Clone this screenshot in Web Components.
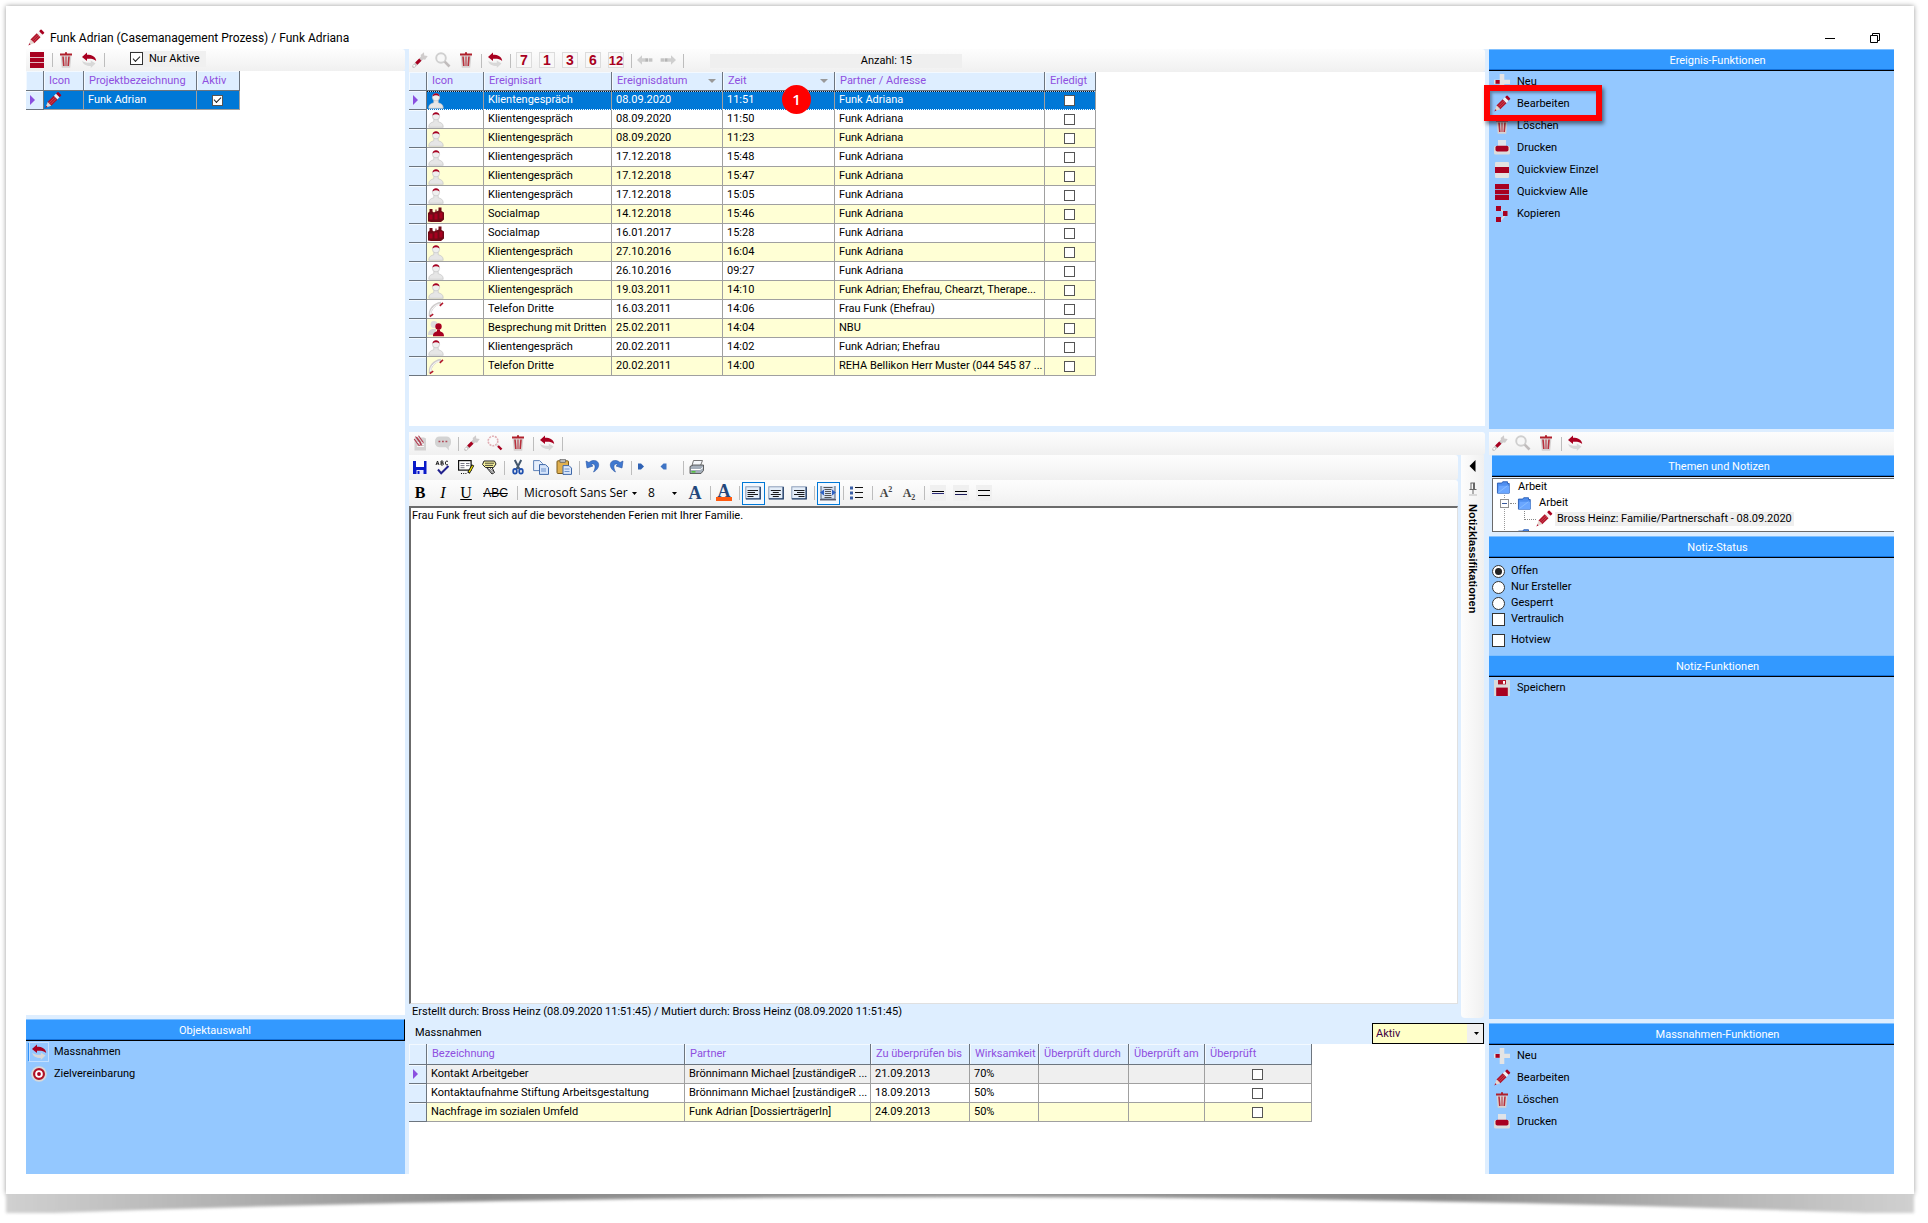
<!DOCTYPE html>
<html lang="de">
<head>
<meta charset="utf-8">
<title>Funk Adrian (Casemanagement Prozess) / Funk Adriana</title>
<style>
  html, body { margin: 0; background: #fff; }
  body {
    font: 11px/14px Roboto, "Liberation Sans", Arial, sans-serif;
    color: #000;
    --pale: #deeeff;
    --panel: #94c8ff;
    --accent: #3399ff;
    --violet: #8f4fe0;
    --red: #a80020;
  }
</style>
</head>
<body>
<case-app></case-app>

<script>
const ICONS = {
  pencil: `<g transform="translate(-.6 .4) rotate(45 8 8)"><rect x="5.500" y="-2.500" width="5" height="3" rx=".8" fill="#a80020"/><rect x="5.500" y=".5" width="5" height="3" fill="#f4f0f0"/><rect x="5.300" y="3.500" width="5.400" height="8.800" fill="#b0142a"/><path d="M7.200 3.600v8.600M9 3.600v8.600" stroke="#d9606c" stroke-width=".6"/><path d="M5.500 12.200h5L8.600 16.500H7.400z" fill="#e6d6d0"/><path d="M7.200 15.600h1.600L8 18z" fill="#a80020"/></g>`,
  trash: `<path d="M2.600 3.500h10.800l-1.200 12.300H3.800z" fill="#d6d2d2"/><path d="M5 4.500l.8 9.500M11 4.500l-.8 9.500" stroke="#b8303c" stroke-width="1.600"/><path d="M8 4.500V14" stroke="#c05862" stroke-width="1.400"/><path d="M2 2.500h12M7 1.200h2" stroke="#b0202c" stroke-width="1.800"/>`,
  swap: `<path d="M1 5l5-4.400v2.100c5 .1 8.600 1.600 9.200 6.200C13.200 6.800 10 6.500 6 6.700v2.300z" fill="#a80020"/><path d="M14.500 11.600L9.800 15.900v-1.800C5 14 2 12.500 1.200 8.800c2 1.600 4.500 2.200 8.600 2V8.600z" fill="#d8d8d8"/>`,
  stack: `<path d="M1 0h14v5H1zM1 5.700h14v4.600H1zM1 11h14v5H1z" fill="#a80020"/>`,
  wrench: `<path d="M1.700 14.300L11 5" stroke="#cbc8c8" stroke-width="3.200" stroke-linecap="round"/><path d="M4.300 11.700l4-4" stroke="#a80020" stroke-width="3.200"/><path d="M9.300 7l-.6-4L12 .2l.2 3.300 3.500.6-2.600 3.600z" fill="#cfcccc"/><circle cx="2.200" cy="13.800" r="1" fill="#fff"/>`,
  lens: `<circle cx="6" cy="6" r="4.800" fill="#f7f7f7" stroke="#cfcfcf" stroke-width="1.900"/><path d="M9.700 9.700l4.800 4.800" stroke="#c0bcbc" stroke-width="2.600"/>`,
  lensred: `<circle cx="6" cy="6" r="4.800" fill="#fafafa" stroke="#e0aeb4" stroke-width="1.600" stroke-dasharray="2 1"/><path d="M9.500 9.500l1.500 1.500" stroke="#ddd" stroke-width="2.400"/><path d="M11 11l3.500 3.500" stroke="#a80020" stroke-width="2.400"/>`,
  left: `<path d="M0 8l5-4.800v3.100h4v3.400H5v3.100z" fill="#cfcfcf"/><rect x="8.500" y="6.300" width="2.800" height="3.400" fill="#b3b3b3"/><rect x="12" y="6.300" width="3.400" height="3.400" fill="#c4c4c4"/>`,
  right: `<path d="M16 8l-5-4.800v3.100H7v3.400h4v3.100z" fill="#cfcfcf"/><rect x="4.500" y="6.300" width="2.800" height="3.400" fill="#b3b3b3"/><rect x=".6" y="6.300" width="3.400" height="3.400" fill="#c4c4c4"/>`,
  person: `<path d="M.8 15.800c0-4.200 2.400-4.600 5-5.600V8h4.400v2.200c2.600 1 5 1.400 5 5.600z" fill="#e6e6e6" stroke="#c4c4c4" stroke-width=".7"/><circle cx="8" cy="4.800" r="3.600" fill="#efefef" stroke="#c4c4c4" stroke-width=".7"/><path d="M4.500 3.900C4.900-.3 11.100-.3 11.500 3.900 9.500 2.300 6.500 2.300 4.500 3.900z" fill="#a80020"/>`,
  group: `<path d="M0 15V6.500L1.500 5V2.500h3V5L6 6l1.500-1V3h1v2l2-1V1h3v3.500L16 6v7l-3 2.500H3z" fill="#6f0a16"/><path d="M1.500 8h3v5h-3zM6.500 7h3v6h-3zM11.500 6h3v6h-3z" fill="#a80020"/>`,
  phone: `<path d="M2 14.500C1.500 8 6 2.500 13 1.500" fill="none" stroke="#cfcccc" stroke-width="2.600"/><path d="M2.500 12.500C2.500 8 6 4 11.500 2.500" fill="none" stroke="#fff" stroke-width=".9"/><path d="M1.800 15.200l3.400-2.600M11.800 4.400L15 1.400" stroke="#b0182c" stroke-width="1.500"/>`,
  pair: `<circle cx="6" cy="4" r="3.400" fill="#dedede"/><path d="M0 14.500c0-4 2-5 4-6h4v6z" fill="#d6d6d6"/><circle cx="10.500" cy="6" r="3.200" fill="#a80020"/><path d="M5 15.800c0-3.600 2-4 4-5V9h3v1.800c2 1 4 1.400 4 5z" fill="#a80020"/>`,
  plus: `<path d="M5.700 0h4.600v5.700H16v4.200h-5.700V16H5.700V9.900H0V5.700h5.700z" fill="#e4e4e4"/><rect x="1.500" y="6" width="4.200" height="3.800" fill="#a80020"/>`,
  printer: `<rect x="4" y="0" width="8" height="6" fill="#dfe3e8"/><rect x="0" y="6" width="16" height="8.500" rx="1.600" fill="#dcdcdc"/><rect x="1.500" y="5.800" width="13" height="5.800" rx="1.800" fill="#a80020"/>`,
  single: `<rect x="1" y="0" width="14" height="16" rx="1" fill="#e2e2e2"/><rect x="1" y="5" width="14" height="6" fill="#a80020"/>`,
  copyred: `<path d="M6 3l6 5-5 6" fill="none" stroke="#ddd" stroke-width="1.600"/><rect x="2" y="0" width="5" height="5" fill="#a80020"/><rect x="9" y="5" width="4.500" height="5" fill="#a80020"/><rect x="2" y="11" width="5" height="5" fill="#a80020"/>`,
  target: `<circle cx="8" cy="8" r="7.800" fill="#d8d8d8"/><circle cx="8" cy="8" r="4.900" fill="#fff" stroke="#b01226" stroke-width="2.200"/><circle cx="8" cy="8" r="1.900" fill="#a80020"/>`,
  disk: `<rect x="0" y="0" width="16" height="16" fill="#dadada"/><rect x="4" y="0" width="8" height="4.400" fill="#b01226"/><rect x="9" y="1" width="2" height="2.800" fill="#fff"/><rect x="2.200" y="7.600" width="11.600" height="8.400" fill="#a80020"/>`,
  clip: `<path d="M2.500 2.500h9.500l2 1V15.500H2.500z" fill="#d4d2d2"/><path d="M5 7.500h7M5 9.500h7M5 11.500h7" stroke="#f4f4f4"/><path d="M3.500 1.500l6.500 9M6.500.8l5 7M2.200 4l4 5.600c1 1.400 3.600 0 2.600-1.700L4.600 2" fill="none" stroke="#b23c50" stroke-width="1.100"/>`,
  speech: `<rect x="0" y="1.500" width="16" height="10.800" rx="4.500" fill="#d3d3d3"/><path d="M10 11l4 4.500-.5-5.500z" fill="#d3d3d3"/><path d="M3.500 6.500h1.800M7 6.500h1.800M10.500 6.500h1.800" stroke="#b04a58" stroke-width="1.600"/>`,
  save: `<path d="M1 2h13.500v13H1z" fill="#0a1ac8"/><rect x="4" y="2" width="8" height="6" fill="#fff"/><rect x="4.500" y="11" width="7" height="4" fill="#e8e8ff"/><rect x="5.500" y="12" width="2" height="3" fill="#0a1ac8"/>`,
  spell: `<path d="M1 6l1.500-4L4 6M1.600 4.800h1.900M6 2v4h1.600c1.200 0 1.200-2 0-2H6.200 7.400c1 0 1-2 0-2zM13 2.500c-1.500-1.200-2.600 0-2.600 1.500S11.600 6.700 13 5.500" fill="none" stroke="#111" stroke-width=".9"/><path d="M3 10.500l3.200 3.800L13.500 7" fill="none" stroke="#20208c" stroke-width="2"/>`,
  form: `<rect x=".6" y="1.600" width="12.500" height="9.500" fill="#fff" stroke="#111" stroke-width="1.200"/><path d="M2.500 4.500h4M8 4.500h3.500M2.500 6.600h4M8 6.600h3.500M2.500 8.700h4" stroke="#556" stroke-width=".8"/><path d="M15 6l-4.500 8" stroke="#111" stroke-width="2.800"/><path d="M14.700 6.800l-3.600 6.300" stroke="#e8d800" stroke-width="1.300"/><path d="M3 14.500h6" stroke="#111" stroke-dasharray="1 1.200"/>`,
  marker: `<path d="M3 2h10.500l1.500 3-2.500 3.500H4.500L1.500 5.500z" fill="#f3ee9a" stroke="#222" stroke-width="1"/><path d="M4 4.200h9M4 6.400h8" stroke="#222" stroke-width=".8"/><path d="M5.500 8.500l5.500 6.500 2.500-1.500L11 8.500z" fill="#fff" stroke="#222"/><path d="M7.500 9.500l4 4.500M9 9l3.500 4" stroke="#222" stroke-width=".7"/>`,
  cut: `<path d="M4.800 1l4.600 9M11.200 1L6.600 10" stroke="#44586e" stroke-width="2"/><ellipse cx="5" cy="12.300" rx="1.800" ry="2.400" fill="none" stroke="#1f4fae" stroke-width="1.800"/><ellipse cx="11" cy="12.300" rx="1.800" ry="2.400" fill="none" stroke="#1f4fae" stroke-width="1.800"/>`,
  copy: `<path d="M.6 1.600h6l3 3v7h-9z" fill="#e6effc" stroke="#5f83b8"/><path d="M6.500 5.600h6l3 3v6.800h-9z" fill="#d5e4fa" stroke="#3f68a8"/><path d="M8 10h5M8 12h5" stroke="#6c92cc"/>`,
  paste: `<rect x="1" y="1.800" width="11.500" height="12.700" rx="1" fill="#e0b050" stroke="#7a5a1c"/><rect x="4" y=".6" width="5.500" height="3" fill="#b8b8b8" stroke="#555" stroke-width=".6"/><path d="M7 6.600h6l2.500 2.500v6.300H7z" fill="#dbe7fa" stroke="#3f68a8"/><path d="M8.500 10h5M8.500 12.500h5" stroke="#6c92cc"/>`,
  undo: `<path d="M1 2l1 7 6-2-2-1.500c3-2 6 1 2.500 7.500 7-3.500 7-12-.5-11.500-1.500.2-3 .9-4 2z" fill="#3f78d0" stroke="#2a56a4" stroke-width=".6"/>`,
  redo: `<path d="M15 2l-1 7-6-2 2-1.500c-3-2-6 1-2.500 7.500C.5 9.500.5 1 8 1.500c1.500.2 3 .9 4 2z" fill="#3f78d0" stroke="#2a56a4" stroke-width=".6"/>`,
  dot: `<path d="M1 4.500h3l3 3-3 3H1z" fill="#2f62b4"/>`,
  dotl: `<path d="M6.500 4.500h-3L.5 7.500l3 3h3z" fill="#3f74c4"/>`,
  print: `<path d="M4.500 1.500h9l-2 5H3z" fill="#f5f8fc" stroke="#666" stroke-width=".9"/><path d="M1 7.500l3-1.500h10.500v5.500l-2.500 3H1z" fill="#a4aeba" stroke="#444" stroke-width=".8"/><path d="M2 10.500h9.500l2.500-2" fill="none" stroke="#fff"/><rect x="2.500" y="12" width="4" height="1.600" fill="#55c040"/>`,
  al: `<rect x=".8" y="1.800" width="14.400" height="12" fill="#e4edf8" stroke="#8c9eb8"/><path d="M15.200 2v11.900H1" fill="none" stroke="#28446c" stroke-width="1.400"/><path d="M2.500 5.500h10.500M2.500 7.500h7.500M2.500 9.500h10.500M2.500 11.500h6" stroke="#000" stroke-width=".9"/>`,
  ac: `<rect x=".8" y="1.800" width="14.400" height="12" fill="#e4edf8" stroke="#8c9eb8"/><path d="M15.200 2v11.900H1" fill="none" stroke="#28446c" stroke-width="1.400"/><path d="M2.800 5.500h10M4.800 7.500h6M2.800 9.500h10M4.800 11.500h6" stroke="#000" stroke-width=".9"/>`,
  ar: `<rect x=".8" y="1.800" width="14.400" height="12" fill="#e4edf8" stroke="#8c9eb8"/><path d="M15.200 2v11.900H1" fill="none" stroke="#28446c" stroke-width="1.400"/><path d="M3 5.500h10.500M6 7.500h7.500M3 9.500h10.500M7.500 11.500h6" stroke="#000" stroke-width=".9"/>`,
  wrap: `<path d="M1 1v13h14V1" fill="#d8e2f2" stroke="#66788e" stroke-width="1.200"/><path d="M0 14.800h16" stroke="#445" stroke-width="1.200"/><path d="M3.500 2.500h9M4.500 4.500h7M5 6.500h6M5 8.500h6M4.500 10.500h7M4.500 12.500h7" stroke="#444" stroke-width=".9"/><path d="M0 7.500l4-3v6zM16 7.500l-4-3v6z" fill="#2f62c4"/>`,
  list: `<path d="M1 1.500h3v3H1zM1 6.500h3v3H1zM1 11.500h3v3H1z" fill="#3b5fa6"/><path d="M6 2.500h8M6 7.500h8M6 12.500h8" stroke="#111"/>`,
  thin: `<rect width="16" height="16" fill="#f0f0f0"/><path d="M2 6.500h12" stroke="#000"/><path d="M2 8.500h12" stroke="#2a2a78"/>`,
  mid: `<rect width="16" height="16" fill="#f0f0f0"/><path d="M2 6.500h12" stroke="#000"/><path d="M2 9.500h12" stroke="#1a1a58"/>`,
  wide: `<rect width="16" height="16" fill="#f0f0f0"/><path d="M2 5.500h12M2 10.500h12" stroke="#000"/>`,
  folder: `<path d="M.5 3.500h5l1-1.500H12v2h2v11H.5z" fill="#4f8ff0" stroke="#2358b0"/><path d="M2 6.500h12V15H1z" fill="#6aa6ff"/><path d="M2 14L12 6.500" stroke="#8cc0ff"/>`,
  minimise: `<path d="M3 8.500h10" stroke="#000"/>`,
  restore: `<path d="M3.500 5.500h7v7h-7zM5.500 5.500v-2h7v7h-2" fill="none" stroke="#000"/>`,
  pin: `<path d="M5.500 2h4.500M6 2v6M9.500 2v6M8.500 2v6M4.500 8.500h7M8 8.500V13" fill="none" stroke="#666" stroke-width="1"/><path d="M4 14h8" stroke="#bbb"/>`,
  back: `<path d="M10.500 2v12L4.500 8z" fill="#000"/>`
};

/* Every component renders its own template into an open shadow root. */
class Base extends HTMLElement {
  connectedCallback() {
    if (this.shadowRoot) return;
    this.attachShadow({ mode: "open" }).innerHTML = this.render();
  }
  attr(name) { return this.getAttribute(name) || ""; }
}
const define = (name, cls) => customElements.define(name, cls);

const TICKBOX = `
  input[type=checkbox], input[type=radio] { appearance: none; flex: none; box-sizing: border-box; margin: 0; width: 13px; height: 13px; border: 1px solid #333; background: #fff; display: grid; place-items: center; }
  input[type=radio] { border-radius: 50%; }
  input[type=radio]:checked::before { content: ""; width: 7px; height: 7px; border-radius: 50%; background: #222; }
  input[type=checkbox]:checked::before { content: ""; width: 6px; height: 3px; border: solid #222; border-width: 0 0 1px 1px; transform: translateY(-1px) rotate(-45deg); }`;

define("app-icon", class extends Base {
  render() {
    return `<style>:host{display:block;flex:none;width:16px;height:16px}svg{display:block;width:100%;height:100%;overflow:visible}</style>
      <svg viewBox="0 0 16 16" aria-hidden="true">${ICONS[this.attr("name")] || ""}</svg>`;
  }
});

define("tool-bar", class extends Base {
  render() {
    return `<style>:host{display:flex;align-items:center;flex:none;box-sizing:border-box;height:23px;border-radius:0 3px 3px 0;background:linear-gradient(#fdfdfd,#f7f7f7 50%,#f0f0f0)}
      :host([size=m]){height:25px} :host([size=l]){height:26px}</style><slot></slot>`;
  }
});

define("tool-sep", class extends Base {
  render() { return `<style>:host{display:block;flex:none;width:1px;height:14px;margin:0 2px 0 3px;background:#bdbdbd}</style>`; }
});

define("tool-button", class extends Base {
  render() {
    const icon = this.attr("icon");
    return `<style>:host{display:block;flex:none}
      button{display:grid;place-items:center;box-sizing:border-box;width:23px;height:23px;margin:0;padding:0 1px 1px 0;border:1px solid transparent;background:none;color:inherit;font:inherit}
      :host([pressed]) button{border-color:#0078d7;background:#f4f9ff}
      :host([wide]) button{width:36px}
      :host([month]) span{display:block;width:16px;height:16px;background:#f8f8f8;box-shadow:inset 0 0 0 1px #dcdcdc;color:var(--red);font:bold 14px/17px "Liberation Sans",Arial,sans-serif;text-align:center}
      :host([month="12"]) span{font-size:13px}
      :host([serif]) span{font:16px/20px "Liberation Serif","Times New Roman",serif}
      :host([small]) span{font:bold 12px/16px "Liberation Serif","Times New Roman",serif;color:#444}
      :host([color]) span{font:bold 18px/20px "Liberation Serif",serif;color:#24487c}
      :host([color=bar]) span{line-height:14px;border-bottom:4px solid #ff5a10;width:16px;text-align:center;height:13px}
      </style>
      <button type="button" aria-label="${this.attr("label")}">${icon ? `<app-icon name="${icon}"></app-icon>` : `<span><slot></slot></span>`}</button>`;
  }
});

define("side-panel", class extends Base {
  render() {
    return `<style>:host{display:flex;flex-direction:column;min-height:0;background:var(--panel)}
      h2{flex:none;box-sizing:border-box;height:22px;margin:0;border-top:1px solid #80c0ff;border-bottom:1px solid #000;box-shadow:inset 0 -1px #1470d8;background:var(--accent);color:#fff;font:inherit;line-height:21px;text-align:center;padding-left:var(--title-shift,0)}
      :host([framed]) h2{border-right:1px solid #000}
      </style><h2>${this.attr("heading")}</h2><slot></slot>`;
  }
});

define("action-item", class extends Base {
  render() {
    return `<style>:host{display:block;position:relative}
      button{display:flex;align-items:center;gap:7px;height:22px;margin:0;padding:0 5px;border:0;background:none;color:inherit;font:inherit}
      :host([active]) app-icon{box-shadow:0 0 0 1px var(--panel),0 0 0 2px #c4e0ff,-2px 0 0 1px #2e90f8}
      :host([marked]){z-index:1}
      :host([marked])::after{content:"";position:absolute;left:-5px;top:-8px;box-sizing:border-box;width:118px;height:36px;border:6px solid #f00;box-shadow:2px 3px 4px rgba(0,0,0,.5),inset 2px 2px 3px rgba(0,0,0,.35);pointer-events:none}
      </style><button type="button"><app-icon name="${this.attr("icon")}"></app-icon><slot></slot></button>`;
  }
});

define("check-option", class extends Base {
  render() {
    const type = this.attr("type") || "checkbox";
    return `<style>:host{display:block} label{display:flex;align-items:center;gap:6px;height:16px} ${TICKBOX}</style>
      <label><input type="${type}" ${this.hasAttribute("checked") ? "checked" : ""}><slot></slot></label>`;
  }
});

define("step-badge", class extends Base {
  render() {
    return `<style>:host{display:block;width:29px;height:29px;border-radius:50%;background:#f00;color:#fff;font:600 15px/29px "Open Sans",sans-serif;text-align:center}</style><slot></slot>`;
  }
});

/* Grid: cells may be text, {icon}, {check} or {text, badge}. */
const GRIDS = {
  projects: {
    head: 20,
    cols: [["Icon", 40], ["Projektbezeichnung", 113], ["Aktiv", 43]],
    rows: [[{ icon: "pencil" }, "Funk Adrian", { check: true }]],
    selected: 0
  },
  events: {
    head: 19, focus: true,
    cols: [["Icon", 57], ["Ereignisart", 128], ["Ereignisdatum", 111, 1], ["Zeit", 112, 1], ["Partner / Adresse", 210], ["Erledigt", 51]],
    rows: [
      ["person", "Klientengespräch", "08.09.2020", "11:51", "Funk Adriana"],
      ["person", "Klientengespräch", "08.09.2020", "11:50", "Funk Adriana"],
      ["person", "Klientengespräch", "08.09.2020", "11:23", "Funk Adriana"],
      ["person", "Klientengespräch", "17.12.2018", "15:48", "Funk Adriana"],
      ["person", "Klientengespräch", "17.12.2018", "15:47", "Funk Adriana"],
      ["person", "Klientengespräch", "17.12.2018", "15:05", "Funk Adriana"],
      ["group", "Socialmap", "14.12.2018", "15:46", "Funk Adriana"],
      ["group", "Socialmap", "16.01.2017", "15:28", "Funk Adriana"],
      ["person", "Klientengespräch", "27.10.2016", "16:04", "Funk Adriana"],
      ["person", "Klientengespräch", "26.10.2016", "09:27", "Funk Adriana"],
      ["person", "Klientengespräch", "19.03.2011", "14:10", "Funk Adrian; Ehefrau, Chearzt, Therape..."],
      ["phone", "Telefon Dritte", "16.03.2011", "14:06", "Frau Funk (Ehefrau)"],
      ["pair", "Besprechung mit Dritten", "25.02.2011", "14:04", "NBU"],
      ["person", "Klientengespräch", "20.02.2011", "14:02", "Funk Adrian; Ehefrau"],
      ["phone", "Telefon Dritte", "20.02.2011", "14:00", "REHA Bellikon Herr Muster (044 545 87 ..."]
    ].map(([icon, ...rest], i) => {
      if (i === 0) rest[2] = { text: rest[2], badge: "1" };
      return [{ icon }, ...rest, { check: false }];
    }),
    selected: 0
  },
  measures: {
    head: 21,
    cols: [["Bezeichnung", 258], ["Partner", 186], ["Zu überprüfen bis", 99], ["Wirksamkeit", 69], ["Überprüft durch", 90], ["Überprüft am", 76], ["Überprüft", 107]],
    rows: [
      ["Kontakt Arbeitgeber", "Brönnimann Michael [zuständigeR ...", "21.09.2013", "70%", "", "", { check: false }],
      ["Kontaktaufnahme Stiftung Arbeitsgestaltung", "Brönnimann Michael [zuständigeR ...", "18.09.2013", "50%", "", "", { check: false }],
      ["Nachfrage im sozialen Umfeld", "Funk Adrian [DossierträgerIn]", "24.09.2013", "50%", "", "", { check: false }]
    ],
    current: 0
  }
};

define("data-grid", class extends Base {
  render() {
    const g = GRIDS[this.attr("source")];
    const total = g.cols.reduce((n, c) => n + c[1], 18);
    const cell = (c, i) => {
      if (typeof c === "string") return `<td>${c}</td>`;
      if (c.icon) return `<td class="icon"><app-icon name="${c.icon}"></app-icon></td>`;
      if (c.badge) return `<td class="anchor">${c.text}<step-badge>${c.badge}</step-badge></td>`;
      return `<td class="check"><input type="checkbox" aria-label="${g.cols[i][0]}" ${c.check ? "checked" : ""}></td>`;
    };
    return `<style>
      :host{display:block}
      table{width:${total}px;table-layout:fixed;border-collapse:separate;border-spacing:0}
      th,td{box-sizing:border-box;height:19px;padding:0 0 0 4px;border:solid #a0a0a0;border-width:0 1px 1px 0;font:inherit;line-height:18px;text-align:left;white-space:nowrap}
      td{overflow:hidden}
      thead th{height:${g.head}px;padding-left:5px;background:var(--pale);border-color:#6c757f;color:var(--violet);box-shadow:inset 1px 1px #f3f9ff}
      thead th div{display:flex;align-items:center;justify-content:space-between}
      thead i{margin-right:6px;border:4px solid transparent;border-top-color:#999;border-bottom:0}
      tbody th{background:var(--pale);border-color:#6c757f;box-shadow:inset 0 1px #f3f9ff}
      tbody th i{display:block;width:0;border:5px solid transparent;border-left-color:#8a50e0;border-right:0}
      tbody tr:nth-child(odd) td{background:#ffffd5}
      tbody tr:nth-child(even) td{background:#fff}
      tbody tr.current td{background:#efefef}
      tbody tr.selected td{background:#0078d7;color:#fff}
      tbody tr.focus td{border-bottom:1px dotted #fff;background-image:repeating-linear-gradient(90deg,#111 0 1px,#9cf 1px 2px);background-size:100% 1px;background-repeat:no-repeat}
      .icon{padding:0 0 0 1px} .icon app-icon{height:17px}
      .anchor{position:relative;overflow:visible}
      step-badge{position:absolute;left:59px;top:-6px;z-index:1}
      .check{padding:0 1px 0 0}
      ${TICKBOX}
      td input[type=checkbox]{width:11px;height:11px;margin:0 auto;border-color:#555}
      </style>
      <table><colgroup><col style="width:18px">${g.cols.map(c => `<col style="width:${c[1]}px">`).join("")}</colgroup>
      <thead><tr><th></th>${g.cols.map(c => `<th scope="col"><div>${c[0]}${c[2] ? "<i></i>" : ""}</div></th>`).join("")}</tr></thead>
      <tbody>${g.rows.map((r, n) => {
        const sel = g.selected === n, cur = g.current === n;
        return `<tr class="${sel ? "selected" : ""} ${sel && g.focus ? "focus" : ""} ${cur ? "current" : ""}"><th scope="row">${sel || cur ? "<i></i>" : ""}</th>${r.map(cell).join("")}</tr>`;
      }).join("")}</tbody></table>`;
  }
});

define("drop-down", class extends Base {
  render() {
    return `<style>:host{display:grid;flex:none;align-items:center}
      select{grid-area:1/1;appearance:none;width:100%;height:21px;margin:0;padding:0 12px 0 4px;border:0;border-radius:0;background:none;color:#000;font:inherit}
      svg{grid-area:1/1;justify-self:end;margin-right:5px;pointer-events:none;width:5px;height:3px}
      :host([boxed]) select{border:1px solid #000;padding-left:3px;background:linear-gradient(90deg,#ffffc8 calc(100% - 16px),#f0f0f0 0);color:#400040}
      </style><select aria-label="${this.attr("label")}"><option>${this.attr("value")}</option></select><svg viewBox="0 0 5 3"><path d="M0 0h5L2.500 3z"/></svg>`;
  }
});

define("topic-tree", class extends Base {
  render() {
    return `<style>:host{display:block;box-sizing:border-box;height:54px;overflow:hidden;background:#fff;border:solid #6a6a6a;border-width:1px 0 1px 1px}
      ul{list-style:none;margin:0;padding:0} li div{display:flex;align-items:center;height:16px;gap:6px;padding-left:3px}
      app-icon{height:14px} .k{padding-left:7px;gap:0} .k app-icon{margin:0 6px 0 1px}
      .dots{width:6px;margin-left:1px;border-top:1px dotted #888}
      .box{width:9px;height:9px;box-sizing:border-box;border:1px solid #919191;background:linear-gradient(#3a5a9c,#3a5a9c) center/5px 1px no-repeat #fff}
      .sub{background:linear-gradient(#999 50%,transparent 0) 11px 0/1px 2px repeat-y}
      .l{padding-left:31px;gap:0} .l::before{content:"";width:11px;height:8px;margin-bottom:8px;border:dotted #888;border-width:0 0 1px 1px}
      .l app-icon{margin-right:3px;height:16px} .l span{padding:0 2px;background:#efefef}
      .next{padding-left:24px}
      </style>
      <ul><li><div><app-icon name="folder"></app-icon>Arbeit</div>
        <ul class="sub"><li><div class="k"><span class="box"></span><span class="dots"></span><app-icon name="folder"></app-icon>Arbeit</div>
          <ul><li><div class="l"><app-icon name="pencil"></app-icon><span>Bross Heinz: Familie/Partnerschaft - 08.09.2020</span></div></li></ul></li>
        <li><div class="next"><app-icon name="folder"></app-icon></div></li></ul></li></ul>`;
  }
});

define("note-editor", class extends Base {
  render() {
    return `<style>:host{display:flex;flex:1;min-height:0;gap:3px;padding-right:1px}
      .main{flex:1;min-width:0;display:flex;flex-direction:column}
      textarea{flex:1;box-sizing:border-box;margin:0;padding:1px;resize:none;outline:0;border:solid #6b6b6b;border-width:2px 1px 1px 2px;border-right-color:#e0e0e0;border-bottom-color:#e0e0e0;background:#fff;color:#000;font:inherit}
      .status{flex:none;height:14px;line-height:16px;padding-left:3px}
      .font{width:122px;margin-right:2px;font:12px/16px "Open Sans","Noto Sans",sans-serif} .size{width:38px;margin-right:2px;font:12px/16px "Open Sans","Noto Sans",sans-serif}
      s{font:12px/16px "Liberation Sans",Arial,sans-serif}
      sup,sub{font-size:8px;line-height:0}
      aside{flex:none;width:23px;display:flex;flex-direction:column;align-items:center;gap:7px;padding-top:3px;background:linear-gradient(90deg,#fdfdfd,#f0f0f0);border-radius:0 0 4px 4px;box-sizing:border-box}
      aside span{writing-mode:vertical-rl;font:bold 11px/14px "Liberation Sans",Arial,sans-serif}
      </style>
      <div class="main">
        <tool-bar size="m">
          <tool-button icon="save" label="Speichern"></tool-button><tool-button icon="spell" label="Rechtschreibung"></tool-button><tool-button icon="form" label="Formular"></tool-button><tool-button icon="marker" label="Textbaustein"></tool-button><tool-sep></tool-sep>
          <tool-button icon="cut" label="Ausschneiden"></tool-button><tool-button icon="copy" label="Kopieren"></tool-button><tool-button icon="paste" label="Einfügen"></tool-button><tool-sep></tool-sep>
          <tool-button icon="undo" label="Rückgängig"></tool-button><tool-button icon="redo" label="Wiederholen"></tool-button><tool-sep></tool-sep>
          <tool-button icon="dot" label="Einzug vergrössern"></tool-button><tool-button icon="dotl" label="Einzug verkleinern"></tool-button><tool-sep></tool-sep>
          <tool-button icon="print" label="Drucken"></tool-button>
        </tool-bar>
        <tool-bar size="l">
          <tool-button serif label="Fett"><b>B</b></tool-button><tool-button serif label="Kursiv"><em>I</em></tool-button><tool-button serif label="Unterstrichen"><u>U</u></tool-button><tool-button wide label="Durchgestrichen"><s>ABC</s></tool-button><tool-sep></tool-sep>
          <drop-down class="font" label="Schriftart" value="Microsoft Sans Ser"></drop-down><drop-down class="size" label="Schriftgrösse" value="8"></drop-down>
          <tool-button color label="Schrift">A</tool-button><tool-sep></tool-sep><tool-button color="bar" label="Schriftfarbe">A</tool-button><tool-sep></tool-sep>
          <tool-button icon="al" pressed label="Linksbündig"></tool-button><tool-button icon="ac" label="Zentriert"></tool-button><tool-button icon="ar" label="Rechtsbündig"></tool-button><tool-sep></tool-sep>
          <tool-button icon="wrap" pressed label="Zeilenumbruch"></tool-button><tool-sep></tool-sep>
          <tool-button icon="list" label="Liste"></tool-button><tool-sep></tool-sep>
          <tool-button small label="Hochgestellt">A<sup>2</sup></tool-button><tool-button small label="Tiefgestellt">A<sub>2</sub></tool-button><tool-sep></tool-sep>
          <tool-button icon="thin" label="Zeilenabstand 1"></tool-button><tool-button icon="mid" label="Zeilenabstand 1.5"></tool-button><tool-button icon="wide" label="Zeilenabstand 2"></tool-button>
        </tool-bar>
        <textarea aria-label="Notiz" spellcheck="false">Frau Funk freut sich auf die bevorstehenden Ferien mit Ihrer Familie.</textarea>
        <div class="status">Erstellt durch: Bross Heinz (08.09.2020 11:51:45) / Mutiert durch: Bross Heinz (08.09.2020 11:51:45)</div>
      </div>
      <aside><app-icon name="back"></app-icon><app-icon name="pin"></app-icon><span>Notizklassifikationen</span></aside>`;
  }
});

define("page-sheet", class extends Base {
  render() {
    return `<style>:host{display:flex;flex-direction:column;box-sizing:border-box;min-height:100vh;padding:6px 14px 0 6px}
      .sheet{flex:1;display:flex;flex-direction:column;box-sizing:border-box;padding:21px 20px 20px;background:#fff;box-shadow:0 0 5px rgba(0,0,0,.4)}
      svg{flex:none;display:block;width:100%;height:29px;overflow:visible}
      </style><div class="sheet"><slot></slot></div>
      <svg viewBox="0 0 1908 29" preserveAspectRatio="none" aria-hidden="true">
        <defs><linearGradient id="g"><stop offset="0" stop-color="#d0d0d0"/><stop offset=".12" stop-color="#b0b0b0"/><stop offset=".25" stop-color="#8a8a8a"/><stop offset=".5" stop-color="#9a9a9a"/><stop offset=".75" stop-color="#8a8a8a"/><stop offset=".88" stop-color="#b0b0b0"/><stop offset="1" stop-color="#d0d0d0"/></linearGradient>
        <filter id="b" x="-1%" y="-20%" width="102%" height="150%"><feGaussianBlur stdDeviation="1.500"/></filter>
        <clipPath id="c"><path d="M-6 0h1920v29H-6z"/></clipPath></defs>
        <g clip-path="url(#c)"><path d="M0-6H1908V19H1860Q954-13 48 19H0z" fill="url(#g)" filter="url(#b)"/></g></svg>`;
  }
});

define("case-app", class extends Base {
  render() {
    return `<style>
      :host{display:block}
      header{flex:none;display:flex;align-items:center;gap:6px;height:22px;padding:0 11px 0 2px}
      h1{flex:1;margin:0;font:12px/16px Roboto,"Open Sans",sans-serif}
      .win{margin-left:23px}
      main{flex:1;display:grid;grid-template-columns:minmax(0,379fr) minmax(0,1076fr) minmax(0,405fr);gap:4px;background:var(--pale)}
      section{display:flex;flex-direction:column;min-height:0}
      .white{background:#fff}
      .grow{flex:1}
      .aktive{margin:0 0 3px 23px;padding-right:7px;background:#f0f0f0}
      .count{margin-left:24px;width:252px;box-sizing:border-box;padding-right:50px;line-height:14px;background:#efefef;text-align:right}
      .splitter{flex:none;height:6px}
      .caption{flex:none;display:flex;align-items:flex-end;justify-content:space-between;height:26px;padding:0 1px 0 6px;line-height:22px}
      .caption drop-down{width:112px;line-height:normal}
      .right{--title-shift:52px}
      .right tool-bar{border-radius:0;margin-top:3px}
      .topics{padding-left:3px}
      .state{height:119px;margin-top:4px}
      .state .opts{padding:5px 0 0 3px}
      .gap{margin-top:5px}
      </style>
      <page-sheet>
        <header><app-icon name="pencil"></app-icon><h1>Funk Adrian (Casemanagement Prozess) / Funk Adriana</h1>
          <app-icon class="win" name="minimise"></app-icon><app-icon class="win" name="restore"></app-icon></header>
        <main>
          <section>
            <tool-bar style="height:22px"><tool-button icon="stack" label="Alle"></tool-button><tool-sep></tool-sep><tool-button icon="trash" label="Löschen"></tool-button><tool-button icon="swap" label="Aktualisieren"></tool-button><tool-sep></tool-sep>
              <check-option class="aktive" checked>Nur Aktive</check-option></tool-bar>
            <div class="white grow"><data-grid source="projects"></data-grid></div>
            <side-panel framed heading="Objektauswahl" style="height:155px;margin-top:4px">
              <action-item icon="swap" active>Massnahmen</action-item>
              <action-item icon="target">Zielvereinbarung</action-item>
            </side-panel>
          </section>
          <section>
            <tool-bar><tool-button icon="wrench" label="Bearbeiten"></tool-button><tool-button icon="lens" label="Suchen"></tool-button><tool-button icon="trash" label="Löschen"></tool-button><tool-sep></tool-sep><tool-button icon="swap" label="Aktualisieren"></tool-button><tool-sep></tool-sep>
              <tool-button month="7" label="7">7</tool-button><tool-button month="1" label="1">1</tool-button><tool-button month="3" label="3">3</tool-button><tool-button month="6" label="6">6</tool-button><tool-button month="12" label="12">12</tool-button><tool-sep></tool-sep>
              <tool-button icon="left" label="Zurück"></tool-button><tool-button icon="right" label="Weiter"></tool-button><tool-sep></tool-sep>
              <div class="count">Anzahl: 15</div></tool-bar>
            <div class="white" style="height:354px"><data-grid source="events"></data-grid></div>
            <div class="splitter"></div>
            <tool-bar><tool-button icon="clip" label="Anhang"></tool-button><tool-button icon="speech" label="Kommentar"></tool-button><tool-sep></tool-sep><tool-button icon="wrench" label="Bearbeiten"></tool-button><tool-button icon="lensred" label="Suchen"></tool-button><tool-button icon="trash" label="Löschen"></tool-button><tool-sep></tool-sep><tool-button icon="swap" label="Aktualisieren"></tool-button><tool-sep></tool-sep></tool-bar>
            <note-editor></note-editor>
            <div class="caption"><span>Massnahmen</span><drop-down boxed label="Status" value="Aktiv"></drop-down></div>
            <div class="white" style="height:130px"><data-grid source="measures"></data-grid></div>
          </section>
          <section class="right">
            <side-panel heading="Ereignis-Funktionen" style="height:380px">
              <action-item icon="plus">Neu</action-item>
              <action-item icon="pencil" marked>Bearbeiten</action-item>
              <action-item icon="trash">Löschen</action-item>
              <action-item icon="printer">Drucken</action-item>
              <action-item icon="single">Quickview Einzel</action-item>
              <action-item icon="stack">Quickview Alle</action-item>
              <action-item icon="copyred">Kopieren</action-item>
            </side-panel>
            <tool-bar><tool-button icon="wrench" label="Bearbeiten"></tool-button><tool-button icon="lens" label="Suchen"></tool-button><tool-button icon="trash" label="Löschen"></tool-button><tool-sep></tool-sep><tool-button icon="swap" label="Aktualisieren"></tool-button></tool-bar>
            <side-panel class="topics" heading="Themen und Notizen" style="background:var(--pale)"><topic-tree style="margin-top:1px"></topic-tree></side-panel>
            <side-panel class="state" heading="Notiz-Status"><div class="opts">
              <check-option type="radio" checked>Offen</check-option>
              <check-option type="radio">Nur Ersteller</check-option>
              <check-option type="radio">Gesperrt</check-option>
              <check-option>Vertraulich</check-option>
              <check-option class="gap">Hotview</check-option></div>
            </side-panel>
            <side-panel class="grow" heading="Notiz-Funktionen"><action-item icon="disk">Speichern</action-item></side-panel>
            <side-panel heading="Massnahmen-Funktionen" style="height:151px;margin-top:4px">
              <action-item icon="plus">Neu</action-item>
              <action-item icon="pencil">Bearbeiten</action-item>
              <action-item icon="trash">Löschen</action-item>
              <action-item icon="printer">Drucken</action-item>
            </side-panel>
          </section>
        </main>
      </page-sheet>`;
  }
});
</script>
</body>
</html>
